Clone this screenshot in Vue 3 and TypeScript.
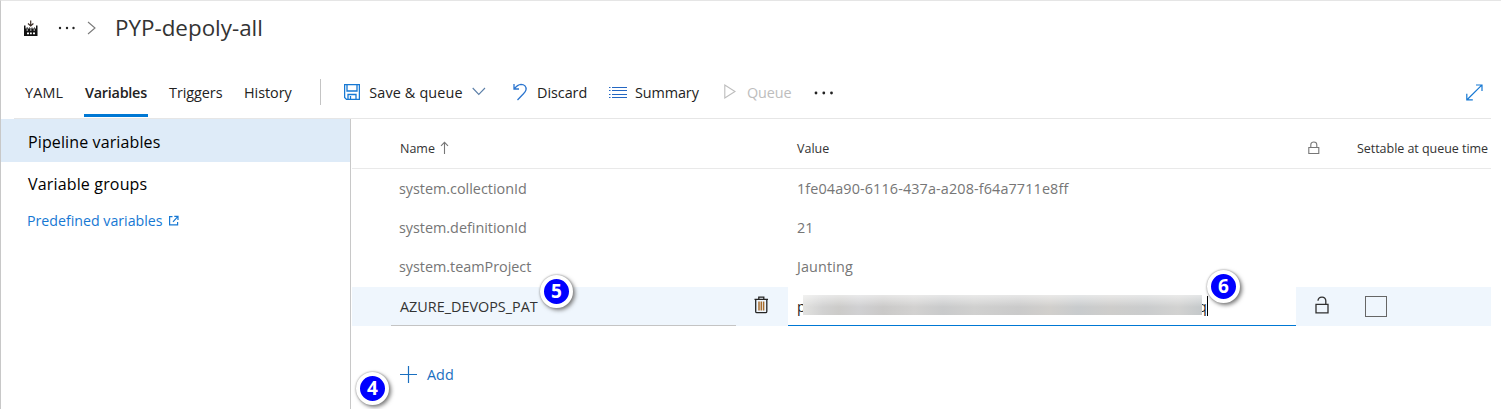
<script setup lang="ts">
interface Row { name: string; value: string }
const tabs: { label: string; cls: string }[] = [
  { label: 'YAML', cls: 't-yaml' },
  { label: 'Variables', cls: 't-vars' },
  { label: 'Triggers', cls: 't-trig' },
  { label: 'History', cls: 't-hist' },
]
const rows: Row[] = [
  { name: 'system.collectionId', value: '1fe04a90-6116-437a-a208-f64a7711e8ff' },
  { name: 'system.definitionId', value: '21' },
  { name: 'system.teamProject', value: 'Jaunting' },
]
</script>

<template>
  <div class="page">
    <header class="crumbs">
      <svg class="factory" width="16" height="18" viewBox="0 0 16 18">
        <path d="M1 6.500h1.500v3h10.500v-3h1.500V17H1z" fill="#111" />
        <path d="M3.500 8.500h1.500v1H3.500zM6 8.500h1v1H6zM8.500 8.500h1v1h-1zM11 8.500h1v1h-1z" fill="#111" />
        <path d="M3.500 10.500h1.500v1H3.500zM7 10.500h1.500v1H7zM10.500 10.500h1.500v1h-1.500zM4 13.500h2v1.700H4zM7 13.500h1.800v1.700H7zM10 13.500h2v1.700h-2z" fill="#fff" />
        <path d="M7.700 1.500v5.500M5 4.500l2.700 2.500 2.700-2.500" fill="none" stroke="#3a2c24" stroke-width="1.200" />
      </svg>
      <svg class="crumb-dots" width="18" height="4" viewBox="0 0 18 4" fill="#222">
        <circle cx="2" cy="2" r="1.200" /><circle cx="9" cy="2" r="1.200" /><circle cx="15.500" cy="2" r="1.200" />
      </svg>
      <svg class="crumb-chev" width="10" height="14" viewBox="0 0 10 14"><path d="M1 1l7 6-7 6" fill="none" stroke="#7a7a7a" stroke-width="1.100" /></svg>
      <h1>PYP-depoly-all</h1>
    </header>

    <nav class="bar">
      <span v-for="t in tabs" :key="t.label" class="tab" :class="t.cls"><span>{{ t.label }}</span></span>
      <i class="sep"></i>
      <button class="cmd c-save">
        <svg class="disk" width="16" height="16" viewBox="0 0 16 16" fill="none" stroke="#1678d3" stroke-width="1.300">
          <path d="M.6.600h14.800v14.800H2.500L.6 13.500zM3 1v6h10V1M4 15v-4.500h8V15M6.500 12v3" />
        </svg>
        <span>Save &amp; queue</span>
        <svg class="down" width="14" height="9" viewBox="0 0 14 9"><path d="M.7 1l6.100 6.500L13 1" fill="none" stroke="#5c7fa8" stroke-width="1.100" /></svg>
      </button>
      <button class="cmd c-discard">
        <svg class="undo" width="15" height="18" viewBox="0 0 15 18" fill="none" stroke="#2b75cf" stroke-width="1.300">
          <path d="M1 1v5h5M1.300 5.700C3 3.500 5 1.500 8 1.300c3.500 0 5.500 2.500 5 5.500-.5 2.200-2 3.400-3.500 5L4.500 17" />
        </svg>
        <span>Discard</span>
      </button>
      <button class="cmd c-summary">
        <svg width="18" height="13" viewBox="0 0 18 13" stroke="#2467c2" stroke-width="1.200">
          <path d="M0 1.500h1.500M3 1.500H18M0 4.500h1.500M3 4.500H18M0 8.500h1.500M3 8.500H18M0 11.500h1.500M3 11.500H18" />
        </svg>
        <span>Summary</span>
      </button>
      <button class="cmd c-queue" disabled>
        <svg width="12" height="15" viewBox="0 0 12 15" fill="none" stroke="#bdbdbd" stroke-width="1.100"><path d="M.8 1v13l10.200-6.500z" /></svg>
        <span>Queue</span>
      </button>
      <svg class="more" width="20" height="4" viewBox="0 0 20 4" fill="#222">
        <circle cx="2" cy="2" r="1.400" /><circle cx="9.800" cy="2" r="1.400" /><circle cx="17.500" cy="2" r="1.400" />
      </svg>
      <svg class="expand" width="17" height="17" viewBox="0 0 17 17" fill="none" stroke="#1678d3" stroke-width="1.200">
        <path d="M1.300 15.500L15.500 1.300M10 1h6v6M.8 9.800v6h6" />
      </svg>
    </nav>

    <div class="body">
      <aside>
        <div class="side on"><span>Pipeline variables</span></div>
        <div class="side groups"><span>Variable groups</span></div>
        <a class="link"><span>Predefined variables</span>
          <svg width="10" height="11" viewBox="0 0 10 11" fill="none" stroke="#1678d3" stroke-width="1.200">
            <path d="M3.500 1.600H.6v8.300h8V7M4 6.800L8.500 1.800M5.300 1.300h3.700v3.700" />
          </svg>
        </a>
      </aside>

      <main>
        <div class="head">
          <div class="c-name">
            <span class="h-name">Name</span>
            <svg width="10" height="14" viewBox="0 0 10 14" fill="none" stroke="#777" stroke-width="1.100"><path d="M4.500 13V1.500M1 4.800l3.500-3.500L8 4.800" /></svg>
          </div>
          <div class="c-value"><span>Value</span></div>
          <svg class="h-lock" width="12" height="14" viewBox="0 0 12 14" fill="none" stroke="#777" stroke-width="1.100">
            <path d="M.8 6.500h10v6h-10zM2.800 6.500V3.800C2.800 0 8.800 0 8.800 3.800v2.700" />
          </svg>
          <span class="h-set">Settable at queue time</span>
        </div>
        <div v-for="r in rows" :key="r.name" class="row">
          <div class="c-name sys"><span>{{ r.name }}</span></div>
          <div class="c-value val"><span>{{ r.value }}</span></div>
        </div>
        <div class="row active">
          <div class="name-input"><span>AZURE_DEVOPS_PAT</span></div>
          <div class="trash">
            <svg width="15" height="18" viewBox="0 0 15 18" fill="none" stroke="#252525" stroke-width="1.300">
              <path d="M.5 3.300h13.500M4.800 3V1.200h5V3M1.700 3.500v12q0 1.200 1.200 1.200h8.700q1.200 0 1.200-1.200v-12" />
              <path d="M5 5.500v9M7.300 5.500v9M9.600 5.500v9" stroke="#a86c2c" stroke-width="1.500" />
            </svg>
          </div>
          <div class="value-input">
            <span class="first">p</span><span class="last">q</span><i class="mask"></i><i class="caret"></i>
          </div>
          <svg class="unlock" width="14" height="18" viewBox="0 0 14 18" fill="none" stroke="#303030" stroke-width="1.300">
            <path d="M1 8.300h12v8.500H1zM3 4.800C3.200.2 10.800-.4 10.800 4.800V8" />
          </svg>
          <i class="check"></i>
        </div>
        <div class="add">
          <svg width="18" height="18" viewBox="0 0 18 18" stroke="#1a6fc0" stroke-width="1.200"><path d="M0 8.500h17M8.500 0v17" /></svg>
          <span>Add</span>
        </div>
      </main>
    </div>

    <b class="badge b4">4</b>
    <b class="badge b5">5</b>
    <b class="badge b6">6</b>
  </div>
</template>

<style>
body { background: #fff; overflow: hidden; }
</style>

<style scoped>
* { box-sizing: border-box; }
.page { position: relative; width: 1501px; height: 409px; border-top: 1px solid #e5e5e5; border-left: 1px solid #c8c8c8; background: #fff; font-family: "Open Sans", "Noto Sans", sans-serif; font-size: 14.4px; color: #222; overflow: hidden; }
svg { display: block; flex: none; }
span { white-space: nowrap; }
.crumbs { display: flex; align-items: center; height: 54px; padding-left: 22px; }
.factory { margin-bottom: 1px; }
.crumb-dots { margin-left: 19px; }
.crumb-chev { margin-left: 11px; }
h1 { margin: 0 0 0 18px; font-size: 22.4px; font-weight: 400; color: #333; line-height: 30px; }
.bar { display: flex; align-items: center; height: 64px; margin: 0 10px 0 13px; border-bottom: 1px solid #e6e6e6; padding-top: 11px; }
.tab { display: flex; align-items: center; height: 50px; margin-right: 20px; padding: 0 1px; flex: none; }
.t-yaml { width: 40px; margin-left: 10px; letter-spacing: .15px; }
.t-vars { width: 64px; font-weight: 600; border-bottom: 3px solid #0078d4; padding-top: 3px; letter-spacing: -.25px; }
.t-trig { width: 55px; letter-spacing: -.05px; }
.t-hist { width: 50px; letter-spacing: -.05px; }
.sep { width: 1px; height: 26px; background: #c4c4c4; flex: none; margin-left: 7px; }
.cmd { display: flex; align-items: center; padding: 0; border: 0; background: none; font: inherit; color: #222; flex: none; height: 30px; }
.c-save { width: 142px; margin-left: 23px; gap: 9px; }
.c-save > span { width: 95px; letter-spacing: .15px; }
.disk, .undo { margin-bottom: 1px; }
.down { margin-bottom: 2px; }
.c-discard { width: 74px; margin-left: 27px; gap: 9px; letter-spacing: -.05px; }
.c-summary { width: 90px; margin-left: 22px; gap: 8px; letter-spacing: -.1px; }
.c-queue { width: 68px; margin-left: 25px; gap: 11px; color: #bdbdbd; letter-spacing: -.1px; }
.c-queue svg { margin-bottom: 2px; }
.more { margin-left: 22px; margin-top: 2px; }
.expand { margin-left: auto; margin-right: 8px; }
.body { display: flex; height: 290px; }
aside { width: 350px; border-right: 1px solid #c8c8c8; }
.side { display: flex; align-items: center; height: 43px; padding: 2px 0 0 27px; font-size: 16px; letter-spacing: .12px; color: #000; }
.side.groups { padding-top: 0; letter-spacing: .16px; }
.on { background: #deebf8; }
.link { display: flex; align-items: center; gap: 7px; padding: 6px 0 0 26px; color: #1678d3; font-size: 14.2px; }
.link span { width: 135px; }
main { flex: 1; padding: 0 10px 0 1px; }
.head { display: flex; align-items: center; height: 50px; padding: 9px 0 0 48px; border-bottom: 1px solid #e9e9e9; font-size: 12.5px; color: #333; margin-bottom: 1px; }
.c-name { display: flex; align-items: center; width: 397px; flex: none; }
.h-name { width: 40px; }
.c-value { width: 511px; flex: none; }
.h-lock { margin-right: 37px; }
.h-set { flex: none; letter-spacing: -.04px; }
.row { display: flex; align-items: center; height: 39px; padding: 0 0 2px 48px; color: #767676; }
.sys { letter-spacing: -.02px; }
.sys span { margin-left: -1px; }
.val { letter-spacing: .12px; }
.active { background: #eff6fd; padding: 0 0 0 39px; }
.name-input { width: 345px; height: 39px; display: flex; align-items: center; padding-left: 9px; border-bottom: 1px solid #c4c4c4; color: #333; }
.trash { width: 52px; padding: 0 0 4px 18px; }
.value-input { position: relative; display: flex; align-items: center; width: 508px; height: 39px; padding-left: 9px; background: #fff; border-bottom: 1px solid #0078d4; color: #222; }
.first { width: 401px; }
.last { width: 9px; }
.mask { position: absolute; left: 15px; top: 8px; width: 399px; height: 20px; background: linear-gradient(180deg, rgba(255,255,255,.55), rgba(255,255,255,0) 60%), linear-gradient(90deg, #e2e2e0 0, #d1d1d1 5%, #cccbc9 9%, #d0d0d2 14%, #cac9c8 20%, #d2d1d0 28%, #c9cacb 35%, #d0d0cf 43%, #cacaca 54%, #d1cfcc 62%, #c8cbcd 69%, #cecdcb 77%, #cacccd 86%, #d2d2d1 94%, #c4c8ca); }
.caret { width: 1px; height: 20px; margin-bottom: 1px; background: #000; }
.unlock { margin-left: 19px; margin-bottom: 4px; }
.check { width: 22px; height: 21px; margin-left: 36px; border: 1px solid #666; }
.add { display: flex; align-items: center; gap: 8px; padding: 39px 0 0 48px; color: #1a6fc0; }
.add span { margin-left: 1px; }
.badge { position: absolute; width: 33px; height: 33px; border-radius: 50%; border: 4px solid #fff; background: #00f; color: #fff; box-shadow: 0 0 2px #888, 2px 2px 4px #777; font: bold 19px/25px "Noto Sans", sans-serif; text-align: center; }
.b4 { left: 355px; top: 371px; }
.b5 { left: 539px; top: 274px; }
.b6 { left: 1206px; top: 269px; }
</style>
